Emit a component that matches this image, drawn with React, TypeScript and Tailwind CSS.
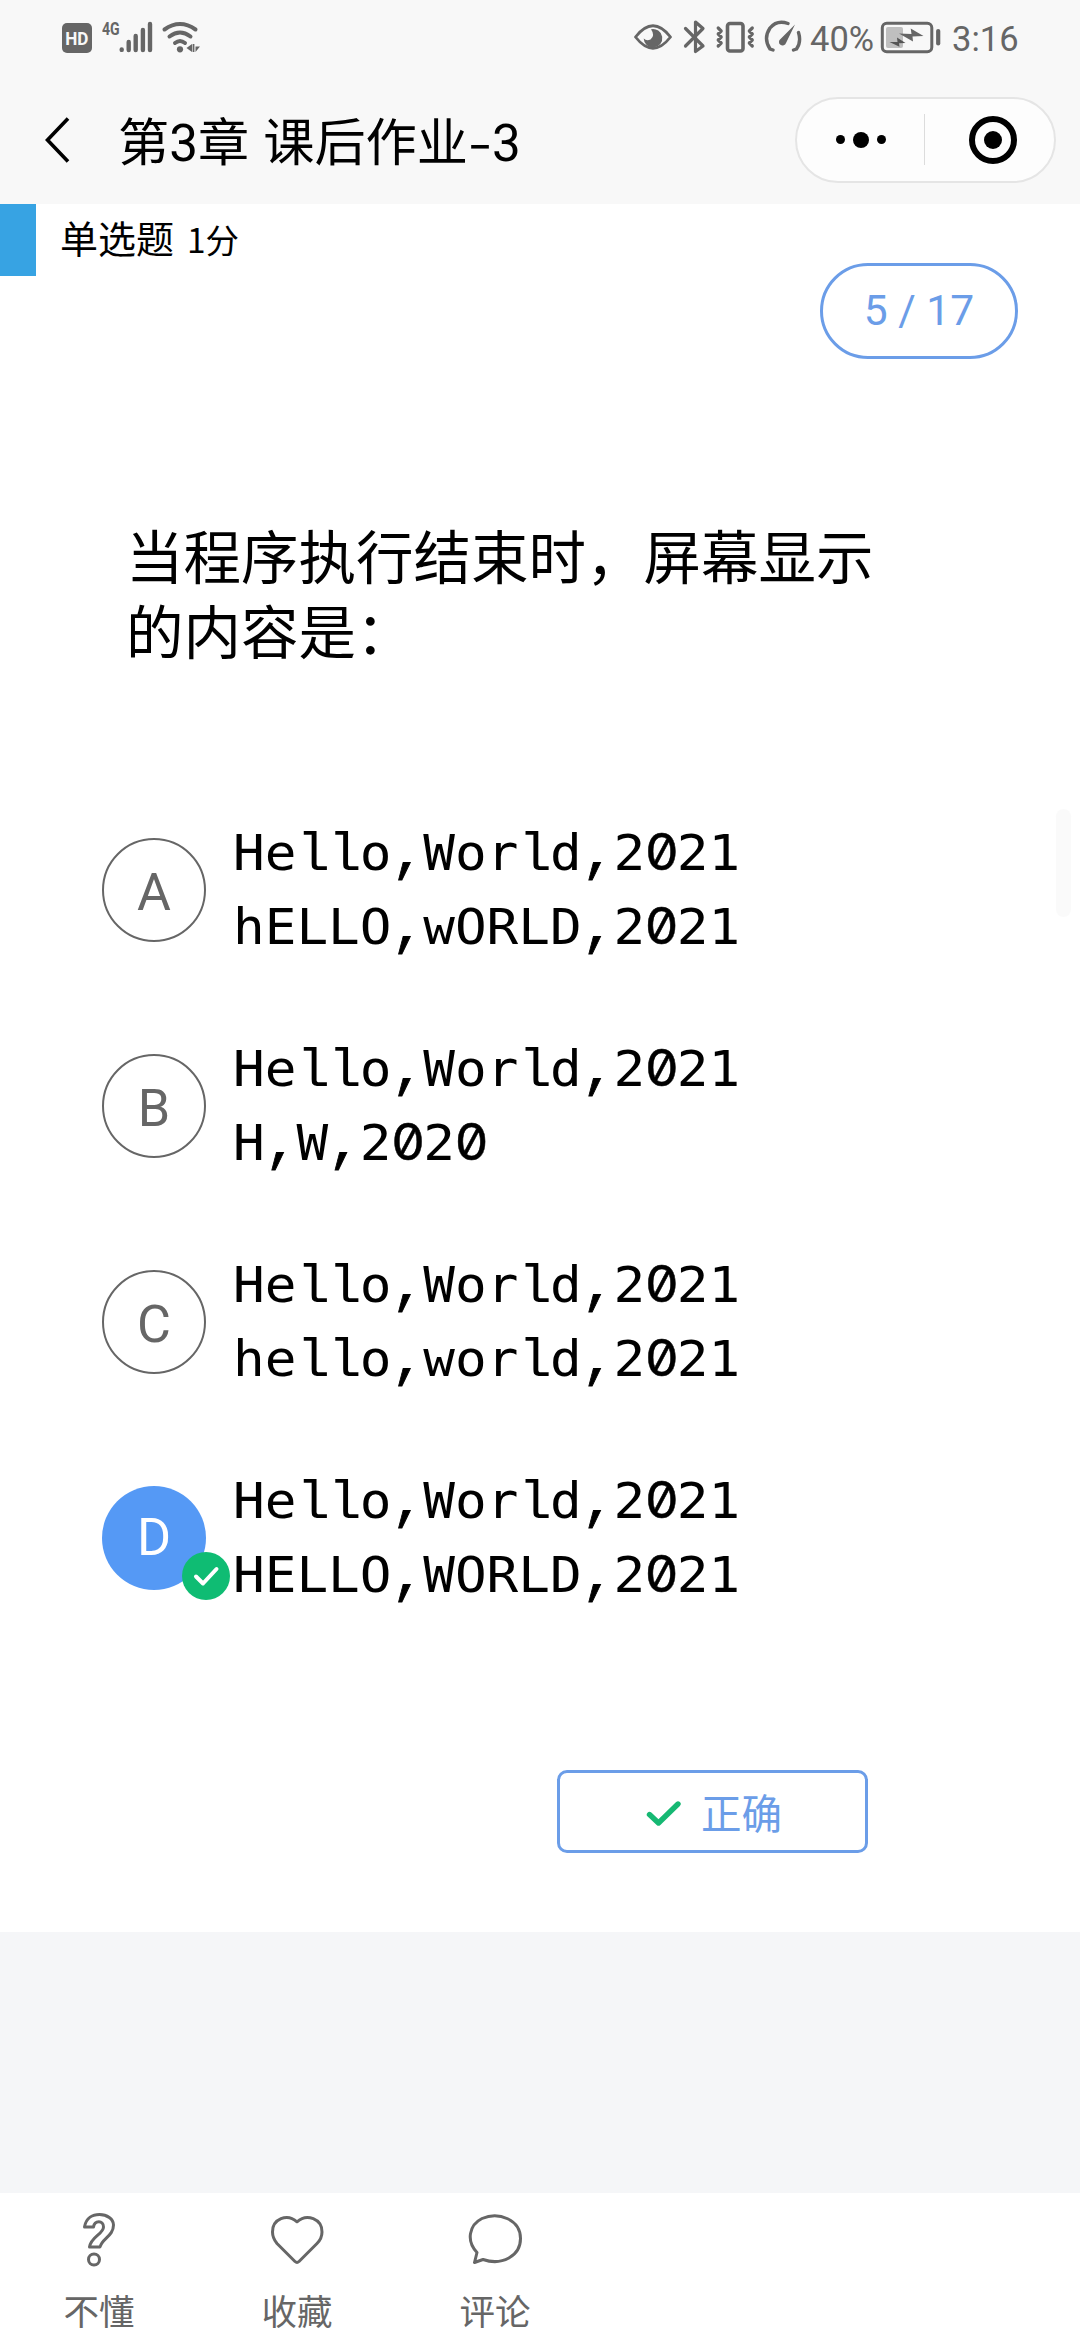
import React from "react";

const CJK = "font-['Noto_Sans_CJK_SC',sans-serif]";

type BoxProps = { x: number; w: number; children: React.ReactNode };

function StatusIcon({ x, w, children }: BoxProps) {
  return (
    <svg width={w} height={75} viewBox={`${x} 0 ${w} 75`} className="shrink-0" fill="none" stroke="#666666" strokeLinecap="round" strokeLinejoin="round">
      {children}
    </svg>
  );
}

function StatusBar() {
  return (
    <div className="flex h-[75px] shrink-0 text-[#666666]">
      <div className="flex w-[634px] pl-[62px]">
        <div className="mt-[23px] flex h-[30px] w-[30px] items-center justify-center rounded-[5px] bg-[#666666] font-['Roboto',sans-serif] text-[19px] font-bold leading-none text-[#f8f8f8]">
          <span className="scale-x-90">HD</span>
        </div>
        <span className="ml-[10px] mt-[18px] w-[17px] origin-left scale-x-[0.74] font-['Roboto',sans-serif] text-[19px] font-bold leading-[22px]">4G</span>
        <StatusIcon x={119} w={84}>
          <g strokeWidth={4.4}>
            <path d="M121.700 49.500v.4M128.700 42v8M135.700 36v14M142.900 30v20M150 24v26" />
            <path d="M164.500 29.500Q180 18.500 195.500 29.500M169.500 36.500Q180 28.500 190.500 36.500M175 43Q180 39 185 43" strokeWidth={4} />
          </g>
          <circle cx="180" cy="49.300" r="3.100" fill="#666666" stroke="none" />
          <path d="M186.500 48l5.500-4v8zM192.600 44h1.800v8h-1.800zM195.500 46.500h4.500l-4.500 5.500z" fill="#666666" stroke="none" />
        </StatusIcon>
      </div>
      <StatusIcon x={634} w={42}>
        <path d="M635.500 37Q653 14.500 670.500 37Q653 59.500 635.500 37z" strokeWidth={2.8} />
        <path d="M651 29.200A9.300 9.300 0 1 1 643.700 38.500Q646.500 41.500 650.500 39.500Q655.500 35.500 651 29.200z" fill="#666666" stroke="none" />
      </StatusIcon>
      <StatusIcon x={676} w={36}>
        <path d="M685.500 28.500L703 46L695.500 51.500V22L703 28.500L685.500 46" strokeWidth={3.2} />
      </StatusIcon>
      <StatusIcon x={712} w={48}>
        <rect x="727.500" y="23.500" width="15.500" height="27.500" rx="2.500" strokeWidth={3.6} />
        <path d="M718.200 28l3 3-3 3 3 3-3 3 3 3-3 3M752.300 28l-3 3 3 3-3 3 3 3-3 3 3 3" strokeWidth={3.2} />
      </StatusIcon>
      <StatusIcon x={760} w={50}>
        <path d="M788 23.500Q777 19.500 770 28Q763 38.500 770 49L773 50M798.500 32.500Q801.500 42 796.500 49L793.500 50" strokeWidth={3.4} />
        <path d="M795 24.500L786 43A3.600 3.600 0 1 1 780.500 39z" fill="#666666" stroke="none" />
      </StatusIcon>
      <span className="w-[70px] whitespace-nowrap font-['Roboto',sans-serif] text-[34.500px] leading-[79px]">40%</span>
      <StatusIcon x={880} w={72}>
        <rect x="882.300" y="23.300" width="49.500" height="28.500" rx="4.500" strokeWidth={3} />
        <rect x="886" y="27" width="17" height="21" rx="2" fill="#bfbfbf" stroke="none" />
        <path d="M899 33.500l12.500.500-.8-5.500L923.500 36l-11 .500.500 5z" fill="#666666" stroke="none" />
        <path d="M889.500 42l8 0-.5-4.500 8.500 5.500-6.500.200.500 3.500z" fill="#555555" stroke="none" />
        <path d="M938.200 31v12.500" strokeWidth={4.2} />
      </StatusIcon>
      <span className="whitespace-nowrap font-['Roboto',sans-serif] text-[34.500px] leading-[79px]">3:16</span>
    </div>
  );
}

function NavBar() {
  return (
    <div className="flex h-[129px] shrink-0 items-center">
      <svg width="118" height="60" viewBox="0 109.500 118 60" fill="none" stroke="#000" strokeWidth="3.600">
        <path d="M68 118L47.500 139.500L68 161" />
      </svg>
      <h1 className={`${CJK} whitespace-nowrap pt-[3px] text-[51.200px] leading-[60px] text-black`}>
        第<span className="font-['Roboto',sans-serif]">3</span>章<span className="inline-block w-[14px]"> </span>课后作业
        <span className="inline-block w-[24px] origin-center scale-x-[1.350] text-center">-</span>
        <span className="font-['Roboto',sans-serif]">3</span>
      </h1>
      <div className="ml-auto mr-6 flex h-[86px] w-[261px] items-center rounded-full border-2 border-[#e5e5e5] bg-[#fdfdfd]">
        <div className="flex flex-1 items-center justify-center gap-2">
          <span className="h-[9px] w-[9px] rounded-full bg-black" />
          <span className="h-4 w-4 rounded-full bg-black" />
          <span className="h-[9px] w-[9px] rounded-full bg-black" />
        </div>
        <div className="h-[51px] w-px bg-[#dcdcdc]" />
        <div className="flex w-[129px] items-center pl-[44px]">
          <span className="flex h-12 w-12 items-center justify-center rounded-full border-[6px] border-black">
            <span className="h-[18px] w-[18px] rounded-full bg-black" />
          </span>
        </div>
      </div>
    </div>
  );
}

/* One line of monospaced output; zeros are slashed, l and comma take a squarer face. */
function CodeLine({ text }: { text: string }) {
  return (
    <div className="h-[74px] w-[482px] origin-left scale-x-[1.053] whitespace-nowrap font-['DejaVu_Sans_Mono',monospace] text-[50px] leading-[68px]">
      {text.split(/(0|l+|,)/).map((part, i) => {
        if (part === "0") {
          return (
            <span key={i} className="inline-block w-[30.100px] text-center font-['Inter',sans-serif] leading-none [-webkit-text-stroke:0.500px_black] [font-feature-settings:'zero']">
              0
            </span>
          );
        }
        if (part.startsWith("l")) {
          return (
            <span key={i} className="font-['Liberation_Mono',monospace] text-[53px] leading-none tracking-[-1.700px]">
              {part}
            </span>
          );
        }
        if (part === ",") {
          return (
            <span key={i} className="font-['Liberation_Mono',monospace] text-[53px] leading-none tracking-[-1.700px] [-webkit-text-stroke:0.800px_black]">
              ,
            </span>
          );
        }
        return part;
      })}
    </div>
  );
}

type OptionProps = { letter: string; lines: string[]; selected?: boolean };

function Option({ letter, lines, selected }: OptionProps) {
  return (
    <div className="flex h-[216px] pl-[102px]">
      <div
        className={
          "relative mt-[19px] flex h-[104px] w-[104px] items-center justify-center rounded-full font-['Roboto',sans-serif] text-[52px] leading-none " +
          (selected ? "bg-[#5599f5] text-white" : "border-2 border-[#666666] pt-[6px] text-[#666666]")
        }
      >
        {letter}
        {selected && (
          <span className="absolute -bottom-[10px] -right-[24px] flex h-12 w-12 items-center justify-center rounded-full bg-[#0fbc73]">
            <svg width="48" height="48" viewBox="0 0 48 48" fill="none" stroke="white" strokeWidth="4" strokeLinecap="round" strokeLinejoin="round">
              <path d="M14 24.500l7 7L34.500 17" />
            </svg>
          </span>
        )}
      </div>
      <div className="ml-[27px] text-black">
        {lines.map((l) => (
          <CodeLine key={l} text={l} />
        ))}
      </div>
    </div>
  );
}

const OPTIONS: OptionProps[] = [
  { letter: "A", lines: ["Hello,World,2021", "hELLO,wORLD,2021"] },
  { letter: "B", lines: ["Hello,World,2021", "H,W,2020"] },
  { letter: "C", lines: ["Hello,World,2021", "hello,world,2021"] },
  { letter: "D", lines: ["Hello,World,2021", "HELLO,WORLD,2021"], selected: true },
];

function BottomItem({ label, children }: { label: string; children: React.ReactNode }) {
  return (
    <div className="flex w-[198px] flex-col items-center">
      <svg width="60" height="60" viewBox="0 0 60 60" className="mt-4" fill="none" stroke="#666666" strokeWidth="3" strokeLinejoin="round">
        {children}
      </svg>
      <span className={`${CJK} mt-[15px] whitespace-nowrap text-[35.500px] leading-[52px] text-[#666666]`}>{label}</span>
    </div>
  );
}

export default function App() {
  return (
    <div className="relative flex h-[2340px] w-[1080px] flex-col overflow-hidden bg-[#f8f8f8]">
      <StatusBar />
      <NavBar />
      <main className="h-[1728px] shrink-0 bg-white">
        <div className="flex h-[311px] items-start">
          <div className="h-[72px] w-9 bg-[#37a3e3]" />
          <div className={`${CJK} ml-[24px] mt-[5px] flex items-baseline gap-[13px] whitespace-nowrap leading-[56px] text-black`}>
            <span className="text-[38px]">单选题</span>
            <span className="text-[33.500px]">1分</span>
          </div>
          <div className="ml-auto mr-[62px] mt-[59px] flex h-[96px] w-[198px] items-center justify-center rounded-full border-[3px] border-[#6b9de8] font-['Roboto',sans-serif] text-[42.500px] leading-none text-[#6b9de8]">
            5 / 17
          </div>
        </div>
        <p className={`${CJK} ml-[126px] h-[304px] w-[750px] pt-[2px] text-[57.500px] leading-[75px] text-black`}>
          当程序执行结束时，屏幕显示
          <br />
          的内容是：
        </p>
        {OPTIONS.map((o) => (
          <Option key={o.letter} {...o} />
        ))}
        <button className="ml-[557px] mt-[87px] flex h-[83px] w-[311px] items-center rounded-[10px] border-[3px] border-[#6b9de8]">
          <svg width="141" height="40" viewBox="560 1791.500 141 40" fill="none" stroke="#16b873" strokeWidth="5.400" strokeLinecap="round" strokeLinejoin="round">
            <path d="M649.500 1814l9 8.500L678 1803.500" />
          </svg>
          <span className={`${CJK} whitespace-nowrap text-[40.500px] leading-[60px] text-[#6b9de8]`}>正确</span>
        </button>
      </main>
      <div className="h-[261px] shrink-0 bg-[#f5f6f8]" />
      <footer className="flex h-[147px] shrink-0 bg-white">
        <BottomItem label="不懂">
          <path d="M15.500 18C17 8.500 24 5.500 30.500 5.500C38 5.500 44.500 10 44.500 16C44.500 27 33 29.500 31 38H20.500C22 27.500 34.500 25 34.500 18C34.500 11 25.500 11 24.500 18z" />
          <circle cx="25" cy="50.500" r="5.500" />
        </BottomItem>
        <BottomItem label="收藏">
          <path d="M30 12.800C20 4 5.500 10 5.500 23C5.500 28 7.500 31.500 10 34.500L28 52.500Q30 54.300 32 52.500L50 34.500C53 31.500 55 28 55 23C55 10 40 4 30 12.800z" />
        </BottomItem>
        <BottomItem label="评论">
          <path d="M12 43.500C1 32 4 16 17 9.500C34 2 55.500 11 55.500 29.500C55.500 47 37 57 18 50.500L9.500 53.500z" />
        </BottomItem>
      </footer>
      <div className="absolute left-[1056px] top-[809px] h-[108px] w-[15px] rounded-full bg-[#fafafa]" />
    </div>
  );
}
